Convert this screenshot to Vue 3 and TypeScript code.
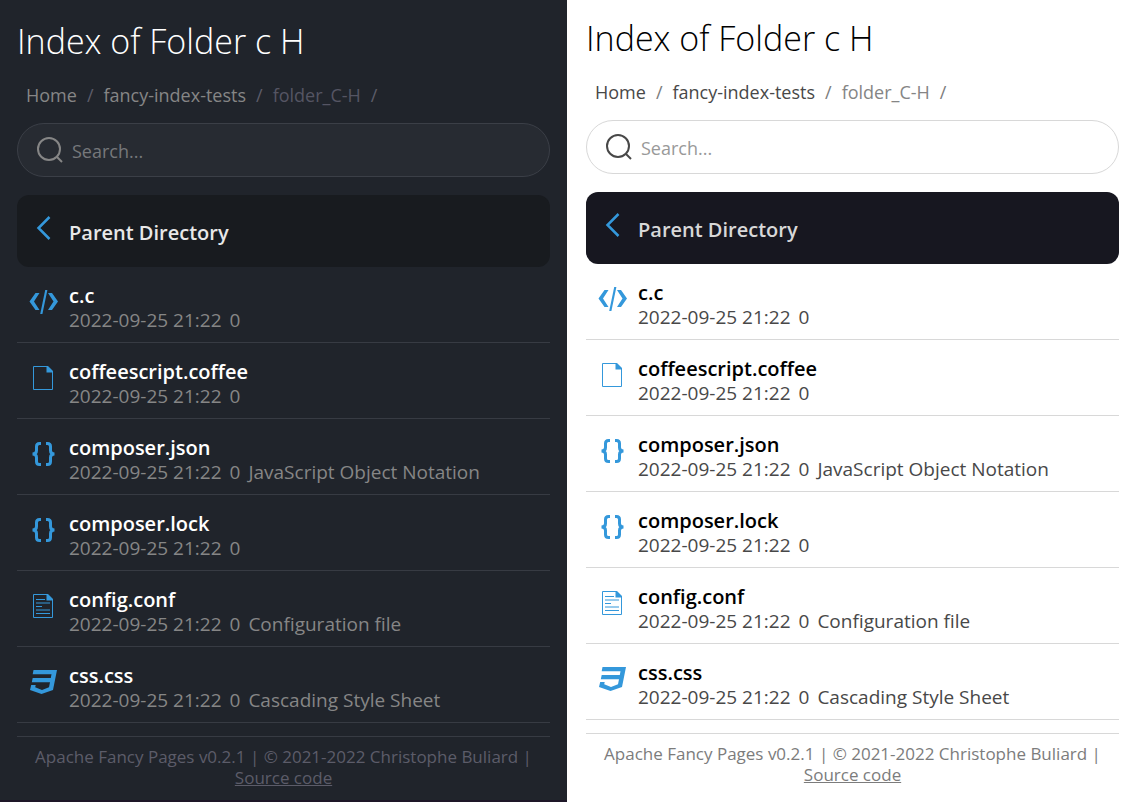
<script setup lang="ts">
type IconName = 'code' | 'file' | 'braces' | 'text' | 'css'

interface Entry {
  name: string
  icon: IconName
  date: string
  size: string
  description?: string
}

const themes = ['dark', 'light'] as const

const date = '2022-09-25 21:22'
const entries: Entry[] = [
  { name: 'c.c', icon: 'code', date, size: '0' },
  { name: 'coffeescript.coffee', icon: 'file', date, size: '0' },
  { name: 'composer.json', icon: 'braces', date, size: '0', description: 'JavaScript Object Notation' },
  { name: 'composer.lock', icon: 'braces', date, size: '0' },
  { name: 'config.conf', icon: 'text', date, size: '0', description: 'Configuration file' },
  { name: 'css.css', icon: 'css', date, size: '0', description: 'Cascading Style Sheet' },
]
</script>

<template>
  <div class="compare">
    <main v-for="theme in themes" :key="theme" class="panel" :class="theme">
      <h1>Index of Folder c H</h1>

      <nav class="crumbs" aria-label="Breadcrumb">
        <a href="#">Home</a><span class="sep">/</span>
        <a href="#">fancy-index-tests</a><span class="sep">/</span>
        <span class="current">folder_C-H</span><span class="sep">/</span>
      </nav>

      <label class="search">
        <svg viewBox="0 0 26 26" aria-hidden="true">
          <circle cx="12" cy="12" r="11" />
          <path d="M19.5 19.5 25 25" />
        </svg>
        <input type="search" placeholder="Search..." aria-label="Search" />
      </label>

      <a class="parent" href="#">
        <svg viewBox="0 0 30 24" aria-hidden="true">
          <path class="line" d="M20.500 1 9.500 12l11 11" />
        </svg>
        <span>Parent Directory</span>
      </a>

      <ul class="list">
        <li v-for="entry in entries" :key="entry.name" class="row">
          <svg v-if="entry.icon === 'code'" viewBox="0 0 30 24" aria-hidden="true">
            <path d="M6.500 3H10.500L5 11.500 10.500 20H6.500L.5 11.500ZM23 3H19L24.500 11.500 19 20H23L29 11.500Z" />
            <path d="M16.200 0H18.400L13.400 24H11.200Z" />
          </svg>
          <svg v-else-if="entry.icon === 'file'" viewBox="0 0 30 24" aria-hidden="true">
            <path class="thin" d="M4.500.5H18L23.500 6V23.500H4.500Z" />
            <path d="M17.500 0H19L24 5V6.500H17.500Z" />
          </svg>
          <svg v-else-if="entry.icon === 'text'" viewBox="0 0 30 24" aria-hidden="true">
            <path class="thin" d="M4.500.5H18L23.500 6V23.500H4.500Z" />
            <path d="M17.500 0H19L24 5V6.500H17.500Z" />
            <path class="thin" d="M7 5.500H16M7 9H21M7 12.500H13M7 16H21M7 19.500H21" />
          </svg>
          <svg v-else-if="entry.icon === 'braces'" viewBox="0 0 30 24" aria-hidden="true">
            <path class="brace" d="M12 1.500H10.500Q7.500 1.500 7.500 4.500V8.500Q7.500 12 3.500 12Q7.500 12 7.500 15.500V19.500Q7.500 22.500 10.500 22.500H12M17 1.500H18.500Q21.500 1.500 21.500 4.500V8.500Q21.500 12 25.500 12Q21.500 12 21.500 15.500V19.500Q21.500 22.500 18.500 22.500H17" />
          </svg>
          <svg v-else viewBox="0 0 30 24" aria-hidden="true">
            <path d="M4.500 0H28L24 20L12.500 24L1 20L2.200 15H6.700L6.200 17.300L13 20L20 17.300L21 12.200H2.800L3.700 8H21.800L22.500 4.300H3.700Z" />
          </svg>
          <div>
            <a class="name" href="#">{{ entry.name }}</a>
            <p class="meta">
              <span>{{ entry.date }}</span>
              <span>{{ entry.size }}</span>
              <span v-if="entry.description">{{ entry.description }}</span>
            </p>
          </div>
        </li>
      </ul>

      <footer>
        Apache Fancy Pages v0.2.1 | © 2021-2022 Christophe Buliard | <a href="#">Source code</a>
      </footer>
    </main>
  </div>
</template>

<style>
body {
  margin: 0;
}
</style>

<style scoped>
.compare {
  display: grid;
  grid-template-columns: 567fr 560fr;
  min-height: 100vh;
  font-family: 'Segoe UI', 'Open Sans', 'Noto Sans', sans-serif;
  font-size: 18px;
}

.panel {
  box-sizing: border-box;
  min-width: 0;
  color: var(--meta);
  background: var(--bg);
}

.dark {
  --bg: #20242b;
  --title: #fff;
  --meta: #868686;
  --muted: #5c5c69;
  --current: #555563;
  --line: #373b43;
  --field: #272b32;
  --field-line: #3b3f47;
  --placeholder: #76787b;
  --parent: #181b1f;
  --parent-text: #e8e8e8;
  padding: 20px 17px 12px;
  border-bottom: 2px solid #1e1728;
}

.light {
  --bg: #fff;
  --title: #000;
  --meta: #484848;
  --muted: #7c7c7c;
  --current: #858585;
  --line: #d8d8d8;
  --field: #fff;
  --field-line: #d8d8d8;
  --placeholder: #999;
  --parent: #171720;
  --parent-text: #d8d8d8;
  padding: 17px 8px 14px 19px;
}

a {
  color: inherit;
  text-decoration: none;
}

h1 {
  margin: 0;
  color: var(--title);
  font-size: 34px;
  font-weight: 300;
  line-height: 42px;
}

.crumbs {
  display: flex;
  gap: 10px;
  padding: 20px 9px 14px;
  line-height: 27px;
}

.sep {
  color: var(--muted);
}

.current {
  color: var(--current);
}

.search {
  display: flex;
  align-items: center;
  gap: 9px;
  box-sizing: border-box;
  height: 54px;
  padding: 0 19px;
  border: 1px solid var(--field-line);
  border-radius: 27px;
  background: var(--field);
}

.search svg {
  flex: none;
  width: 26px;
  height: 26px;
  fill: none;
  stroke: var(--meta);
  stroke-width: 2;
}

.search input {
  flex: 1;
  min-width: 0;
  padding: 2px 0 0;
  border: 0;
  outline: 0;
  color: var(--meta);
  background: transparent;
  font: inherit;
}

.search input::placeholder {
  color: var(--placeholder);
  opacity: 1;
}

.parent,
.row {
  display: flex;
  gap: 10px;
  box-sizing: border-box;
  padding-left: 12px;
}

.parent {
  height: 72px;
  margin-top: 18px;
  padding-top: 21px;
  border-radius: 12px;
  color: var(--parent-text);
  background: var(--parent);
  font-size: 20px;
  font-weight: 600;
  line-height: 34px;
}

.parent svg,
.row svg {
  flex: none;
  width: 30px;
  height: 24px;
  fill: #3498db;
}

.line,
.thin,
.brace {
  fill: none;
  stroke: #3498db;
}

.line {
  stroke-width: 2.5;
}

.brace {
  stroke-width: 3;
}

.list {
  margin: 0;
  padding: 0;
  list-style: none;
}

.row {
  height: 76px;
  padding-top: 16px;
  border-bottom: 1px solid var(--line);
}

.row svg {
  margin-top: 7px;
}

.name {
  display: block;
  color: var(--title);
  font-size: 20px;
  font-weight: 600;
  line-height: 25px;
}

.meta {
  display: flex;
  gap: 8px;
  margin: 0;
  font-size: 19px;
  line-height: 24px;
}

footer {
  margin-top: 13px;
  padding: 9px 16px 0;
  border-top: 1px solid var(--line);
  color: var(--muted);
  font-size: 17px;
  line-height: 21px;
  text-align: center;
}

footer a {
  text-decoration: underline;
}
</style>
